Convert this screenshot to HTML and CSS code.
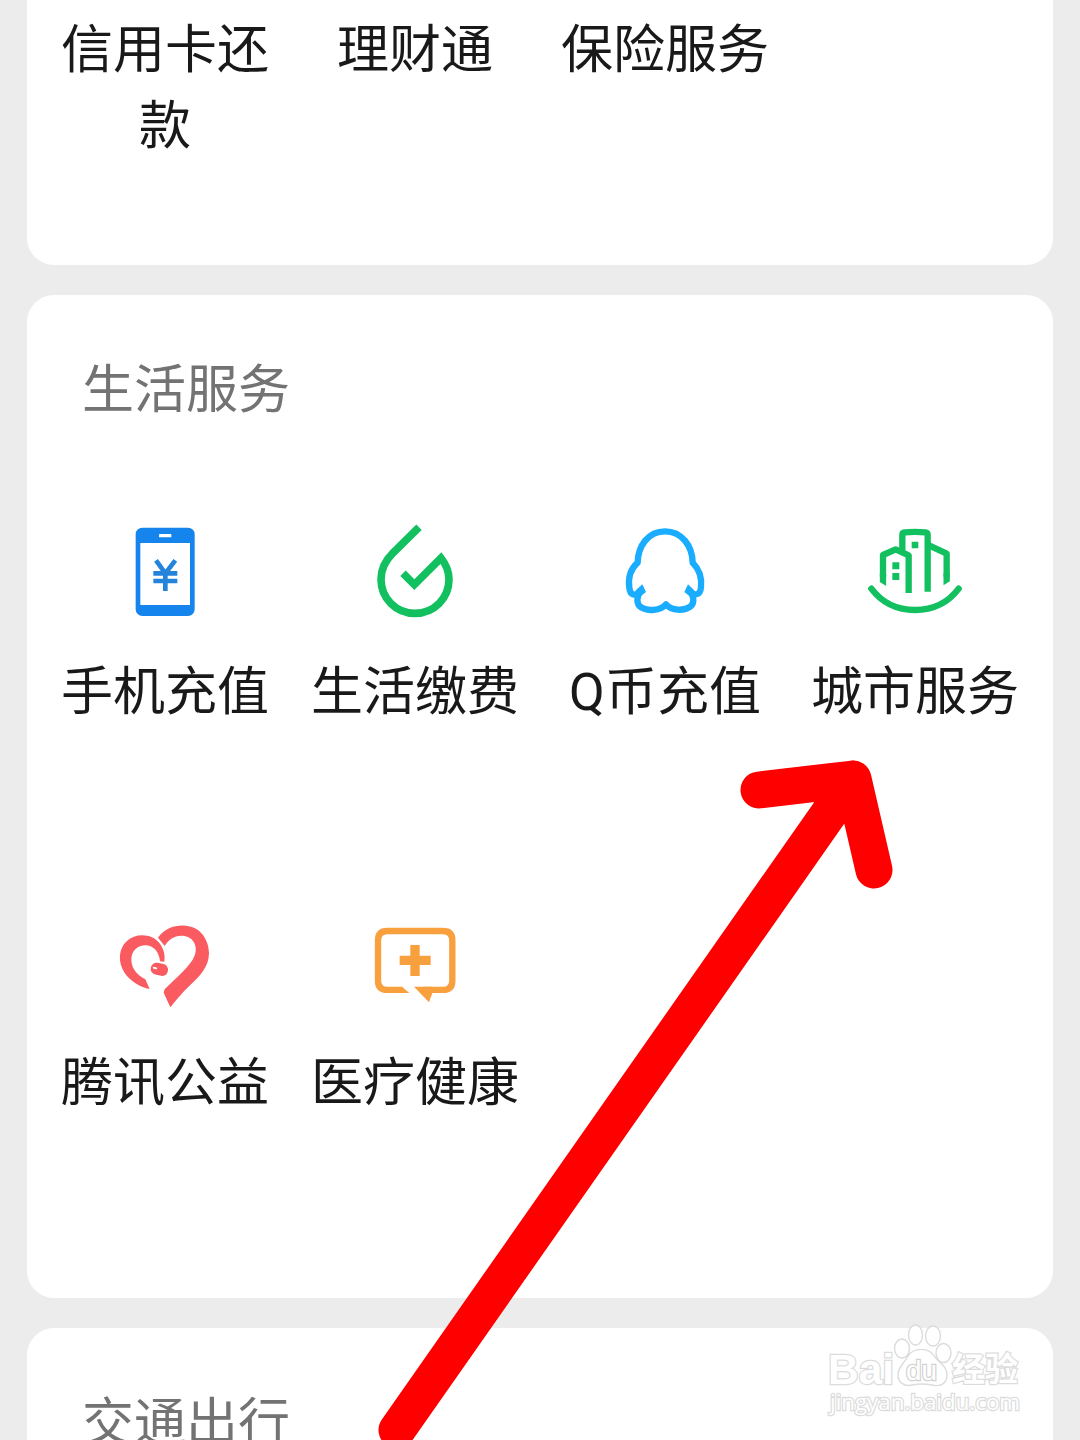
FILE: index.html
```html
<!DOCTYPE html>
<html lang="zh-CN">
<head>
    <meta charset="UTF-8">
    <meta name="viewport" content="width=device-width, initial-scale=1.0">
    <title>服务</title>
    <link rel="stylesheet" href="styles.css">
</head>
<body>
    <main class="page">
        <section class="card card-finance">
            <div class="grid">
                <div class="item"><span class="label">信用卡还款</span></div>
                <div class="item"><span class="label">理财通</span></div>
                <div class="item"><span class="label">保险服务</span></div>
            </div>
        </section>

        <section class="card card-life">
            <h2 class="title">生活服务</h2>
            <div class="grid">
                <div class="item">
                    <svg class="icon" viewBox="0 0 330 330">
                        <rect x="77" y="53" width="177" height="265" rx="20" fill="#1684ed"/>
                        <rect x="91" y="99" width="149" height="186" fill="#fff"/>
                        <rect x="147" y="72" width="37" height="10" rx="2" fill="#fff"/>
                        <path d="M138 151l28 39 30-39M166 188v55M130 190h72M130 213h72" fill="none" stroke="#2484dc" stroke-width="14"/>
                    </svg>
                    <span class="label">手机充值</span>
                </div>
                <div class="item">
                    <svg class="icon" viewBox="0 0 330 330">
                        <path d="M177 52L98 130C73 155 63 181 63 208C63 265 108 310 165 310C222 310 267 265 267 208C267 184 257 162 243 144L163 224L129 190" fill="none" stroke="#12c060" stroke-width="23"/>
                    </svg>
                    <span class="label">生活缴费</span>
                </div>
                <div class="item">
                    <svg class="icon" viewBox="0 0 330 330">
                        <path d="M165 64C115 64 84 107 83 158C60 178 54 205 58 234C61 257 75 260 93 243C78 260 79 283 93 292C115 305 151 302 168 283C185 302 221 304 241 290C254 280 253 257 238 243C256 260 271 255 273 231C276 201 267 177 248 158C247 107 215 64 165 64Z" fill="none" stroke="#1aadff" stroke-width="19" stroke-linejoin="round"/>
                        <path d="M79 239L97 223L108 246L88 262L66 258ZM251 239L234 223L223 246L243 262L264 258Z" fill="#1aadff"/>
                    </svg>
                    <span class="label">Q币充值</span>
                </div>
                <div class="item">
                    <svg class="icon" viewBox="0 0 330 330">
                        <g fill="none" stroke="#12c060" stroke-width="19" stroke-linejoin="round">
                            <path d="M69 200V135L107 118L146 136V249"/>
                            <path d="M127 122V74Q127 68 134 67Q165 64 196 67Q203 68 203 74V245"/>
                            <path d="M207 106L260 131V200"/>
                            <path d="M34 236C67 280 111 300 165 300S263 280 296 236" stroke-linecap="round"/>
                        </g>
                        <path d="M59.500 190h19v38l-19-12zM250.500 190h19v24l-19 12z" fill="#12c060"/>
                        <path d="M155 95h20v20h-20zM97 157h21v21h-21zM97 189h21v21h-21z" fill="#12c060"/>
                    </svg>
                    <span class="label">城市服务</span>
                </div>
                <div class="item">
                    <svg class="icon" viewBox="0 -27 330 330">
                        <g fill="#f95b60">
                            <path d="M150 154C148 128 132 107 109 106C83 105 64 123 64 149C65 179 84 195 106 208L119 237C92 232 61 214 44 189C23 157 25 117 50 94C78 67 127 72 148 99C161 115 166 134 163 155Z"/>
                            <path d="M144 83C170 48 208 42 242 50C273 57 297 91 297 130C297 172 266 202 244 222C216 248 199 270 181 292L161 248L164 238C190 211 225 183 248 149C266 122 258 86 226 79C198 73 178 87 164 108Z"/>
                            <rect x="122" y="160" width="52" height="36" rx="17" transform="rotate(12 148 178)"/>
                        </g>
                        <ellipse cx="135" cy="174" rx="7" ry="3" fill="#fff" transform="rotate(15 135 174)"/>
                    </svg>
                    <span class="label">腾讯公益</span>
                </div>
                <div class="item">
                    <svg class="icon" viewBox="0 -27 330 330">
                        <path d="M128 239.500H82Q54 239.500 54 212V91Q54 63 82 63H249Q277 63 277 91V212Q277 239.500 249 239.500H190" fill="none" stroke="#f89f3e" stroke-width="19"/>
                        <path d="M126 230l22 19h-24zM162 230h55v19l-10 28z" fill="#f89f3e"/>
                        <path d="M165 105v93M119 151h93" stroke="#f89f3e" stroke-width="28"/>
                    </svg>
                    <span class="label">医疗健康</span>
                </div>
            </div>
        </section>

        <section class="card card-travel">
            <h2 class="title">交通出行</h2>
        </section>
    </main>

    <svg class="arrow" viewBox="0 0 1080 1440">
        <path d="M397 1430L853 779M759 790L853 779L874 870"/>
    </svg>

    <svg class="watermark" viewBox="0 0 230 120">
        <g class="paw">
            <ellipse cx="92" cy="38.500" rx="7.500" ry="9.500"/>
            <ellipse cx="105.500" cy="25" rx="7" ry="10"/>
            <ellipse cx="123" cy="26" rx="7.500" ry="10"/>
            <ellipse cx="133.500" cy="43" rx="7.500" ry="9.500"/>
            <path d="M98 46C104 37 119 37 125 47C130 54 137 56 137 65C137 74 130 77 122 75Q112 73 102 75C94 77 88 72 88 65C88 56 95 53 98 46Z"/>
        </g>
        <text class="wm-bold" x="18" y="74" font-size="42" textLength="66" lengthAdjust="spacingAndGlyphs">Bai</text>
        <text class="wm-du" x="96" y="70" font-size="28" textLength="31" lengthAdjust="spacingAndGlyphs">du</text>
        <text class="wm-bold" x="142" y="71" font-size="33" textLength="66" lengthAdjust="spacingAndGlyphs">经验</text>
        <text class="wm-url" x="20" y="100" font-size="22" textLength="190" lengthAdjust="spacingAndGlyphs">jingyan.baidu.com</text>
    </svg>
</body>
</html>
```
FILE: styles.css
```css
body {
    margin: 0;
    height: 1440px;
    position: relative;
    overflow: hidden;
    background: #ececec;
    font-family: Roboto, "Noto Sans CJK SC", sans-serif;
    color: #191919;
}

.page {
    display: flex;
    flex-direction: column;
    gap: 30px;
    height: 1440px;
    padding: 0 27px;
    box-sizing: border-box;
}

.card {
    box-sizing: border-box;
    flex-shrink: 0;
    background: #fff;
    border-radius: 27px;
    padding: 58px 13px 0;
}

.card-finance {
    height: 265px;
    padding-top: 13px;
    border-radius: 0 0 27px 27px;
}

.card-life {
    height: 1003px;
}

.card-travel {
    height: 112px;
    border-radius: 27px 27px 0 0;
    overflow: hidden;
}

.title {
    margin: 0 0 81px;
    padding-left: 42px;
    font-size: 52px;
    font-weight: 400;
    line-height: 76px;
    color: #737373;
}

.card-travel .title {
    margin-bottom: 0;
}

.grid {
    display: grid;
    grid-template-columns: repeat(4, 250px);
    row-gap: 170px;
}

.item {
    display: flex;
    flex-direction: column;
    align-items: center;
    gap: 35px;
}

.icon {
    width: 110px;
    height: 110px;
}

.label {
    width: 210px;
    font-size: 52px;
    font-weight: 400;
    line-height: 76px;
    text-align: center;
}

/* red arrow over the cards */
.arrow {
    position: absolute;
    top: 0;
    left: 0;
    width: 1080px;
    height: 1440px;
    fill: none;
    stroke: #fe0000;
    stroke-width: 37px;
    stroke-linecap: round;
    stroke-linejoin: round;
}

.watermark {
    position: absolute;
    left: 810px;
    top: 1310px;
    width: 230px;
    height: 120px;
    font-family: "Liberation Sans", "Noto Sans CJK SC", sans-serif;
    fill: #fff;
    stroke: #dcdcdc;
    stroke-width: 1.4px;
}

.wm-bold {
    font-weight: bold;
    stroke-width: 2.5px;
    paint-order: stroke;
}

.wm-du {
    font-weight: normal;
    stroke: #d2d2d2;
    stroke-width: 2.5px;
    paint-order: stroke;
}

.wm-url {
    font-family: "Open Sans", sans-serif;
    font-weight: 400;
    stroke-width: 2.5px;
    paint-order: stroke;
}
```
